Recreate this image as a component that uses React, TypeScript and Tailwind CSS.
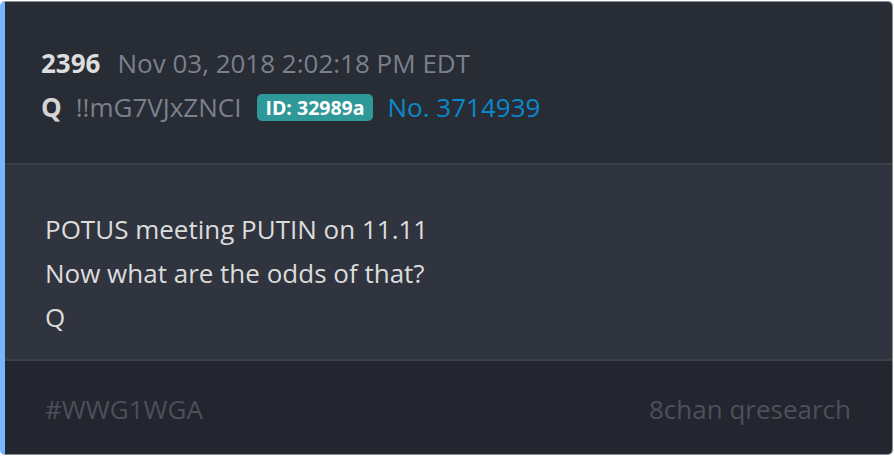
export default function App() {
  return (
    <div className="w-[894px] h-[456px] bg-white pt-px font-['Open_Sans','Noto_Sans',sans-serif]">
      <div className="w-[893px] h-[454px] flex flex-col overflow-hidden rounded-[5px] border border-[#8d9099] border-l-[5px] border-l-[#78b6ff]">
        {/* header */}
        <div className="h-[161px] bg-[#282c34] pt-[39px] pl-[36px] text-[26px] leading-[44px]">
          <div className="flex items-center">
            <span className="font-bold text-[#dddddd]">2396</span>
            <span className="ml-[17px] text-[#7b808c]">Nov 03, 2018 2:02:18 PM EDT</span>
          </div>
          <div className="flex items-center">
            <span className="font-bold text-[#d4d4d4]">Q</span>
            <span className="ml-[14px] text-[#7b808c]">!!mG7VJxZNCI</span>
            <span className="ml-[16px] h-[27px] px-[8px] rounded-[5px] bg-[#2f9898] text-white font-bold text-[19.5px] leading-[27px]">
              ID: 32989a
            </span>
            <span className="ml-[15px] text-[#0a88cc]">No. 3714939</span>
          </div>
        </div>
        <div className="h-[2px] bg-[#3c4049]" />
        {/* body */}
        <div className="h-[194px] bg-[#2f343e] pt-[42px] pl-[40px] text-[26px] leading-[44px] text-[#dcdcdc]">
          <p>POTUS meeting PUTIN on 11.11</p>
          <p>Now what are the odds of that?</p>
          <p>Q</p>
        </div>
        <div className="h-[2px] bg-[#3c4049]" />
        {/* footer */}
        <div className="flex-1 bg-[#23262e] pt-[26px] pl-[40px] pr-[41px] flex justify-between text-[26px] leading-[44px] text-[#4b505b]">
          <span>#WWG1WGA</span>
          <span>8chan qresearch</span>
        </div>
      </div>
    </div>
  );
}
